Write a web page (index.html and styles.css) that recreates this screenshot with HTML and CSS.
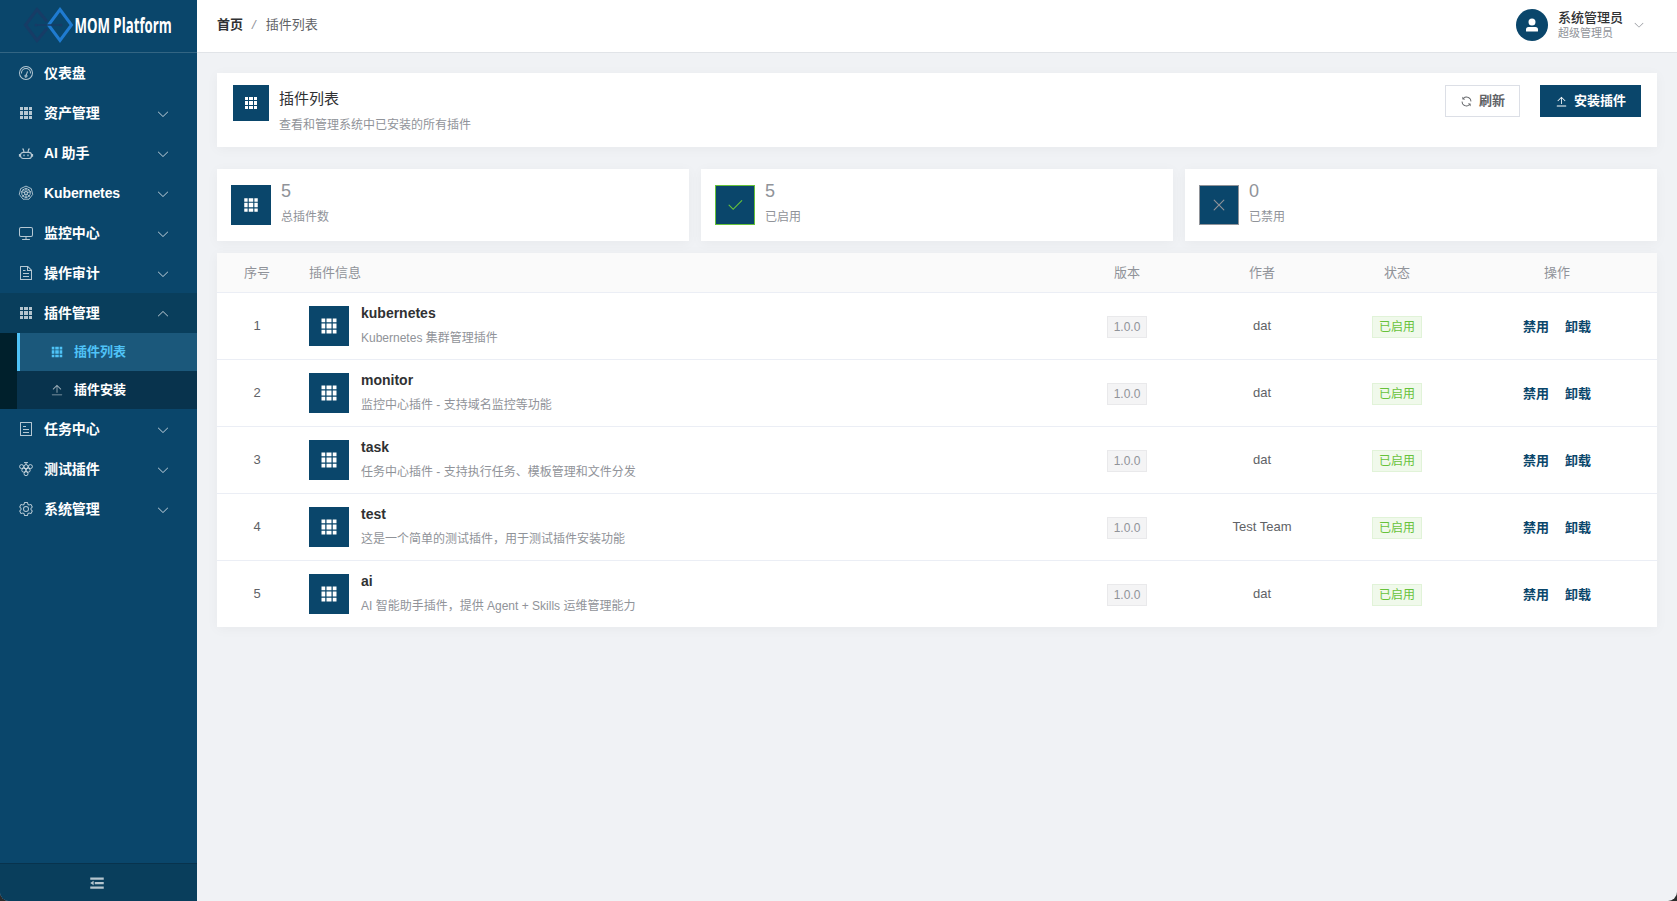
FILE: index.html
```
<!DOCTYPE html>
<html lang="zh-CN">
  <head>
    <meta charset="UTF-8" />
    <meta name="viewport" content="width=device-width, initial-scale=1.0" />
    <title>插件列表 - MOM Platform</title>
    <link rel="stylesheet" href="styles.css">
  </head>

  <body>
    <!-- icon sprite -->
    <svg class="sprite" aria-hidden="true">
      <symbol id="grid" viewBox="0 0 1024 1024"><path d="M640 384v256H384V384zm64 0h192v256H704zm-64 512H384V704h256zm64 0V704h192v192zm-64-768v192H384V128zm64 0h192v192H704zM320 384v256H128V384zm0 512H128V704h192zm0-768v192H128V128z" /></symbol>
      <symbol id="arrow" viewBox="0 0 1024 1024"><path d="M831.872 340.864 512 652.672 192.128 340.864a30.592 30.592 0 0 0-42.752 0 29.12 29.12 0 0 0 0 41.6L489.664 714.24a32 32 0 0 0 44.672 0l340.288-331.712a29.12 29.12 0 0 0 0-41.728 30.592 30.592 0 0 0-42.752 0z" /></symbol>
      <symbol id="upload" viewBox="0 0 1024 1024"><path d="M160 832h704a32 32 0 1 1 0 64H160a32 32 0 1 1 0-64m384-578.304V704h-64V247.296L237.248 490.048 192 444.8 508.8 128l316.8 316.8-45.312 45.248z" /></symbol>
      <symbol id="refresh" viewBox="0 0 1024 1024"><path d="M771.776 794.88A384 384 0 0 1 128 512h64a320 320 0 0 0 555.712 216.448H654.72a32 32 0 1 1 0-64h149.056a32 32 0 0 1 32 32v148.928a32 32 0 1 1-64 0v-50.56zM276.288 295.616h92.992a32 32 0 0 1 0 64H220.16a32 32 0 0 1-32-32V178.56a32 32 0 0 1 64 0v50.56A384 384 0 0 1 896.128 512h-64a320 320 0 0 0-555.776-216.384z" /></symbol>
      <symbol id="odometer" viewBox="0 0 1024 1024"><path d="M512 896a384 384 0 1 0 0-768 384 384 0 0 0 0 768m0 64a448 448 0 1 1 0-896 448 448 0 0 1 0 896" /><path d="M192 512a320 320 0 1 1 640 0 32 32 0 1 1-64 0 256 256 0 1 0-512 0 32 32 0 0 1-64 0" /><path d="M570.432 627.84A96 96 0 1 1 509.568 608l60.992-187.776A32 32 0 1 1 631.424 440l-60.992 187.776zM502.08 734.464a32 32 0 1 0 19.84-60.928 32 32 0 0 0-19.84 60.928" /></symbol>
      <symbol id="robot" viewBox="0 0 16 16"><g fill="none" stroke="currentColor" stroke-width="1.200"><rect x="2.500" y="7.300" width="11" height="6.200" rx="2.800" /><path d="M6 6.800 5.200 4M10 6.800l.8-2.800M1.500 9v2.800M14.500 9v2.800M4.200 4h1.400M10.400 4h1.400" /><path d="M6 9.400v1.800M10 9.400v1.800" /></g></symbol>
      <symbol id="helm" viewBox="0 0 16 16"><g fill="none" stroke="currentColor" stroke-width=".9"><path d="M8 1.100 13.300 3.600 14.700 9.400 11 14.200H5L1.300 9.400 2.700 3.600z" /><circle cx="8" cy="8" r="4.300" /><circle cx="8" cy="8" r="1.500" /><path d="M8 2.800v3.600M8 9.600v3.600M3.200 6.600l3.400 1M9.400 7.600l3.400-1M6.800 9.200l-2.500 2.600M9.200 9.200l2.500 2.600M4.800 4.200l2.200 2.400M11.200 4.200 9 6.600" /></g></symbol>
      <symbol id="monitor" viewBox="0 0 1024 1024"><path d="M544 768v128h192a32 32 0 1 1 0 64H288a32 32 0 1 1 0-64h192V768H192A128 128 0 0 1 64 640V256a128 128 0 0 1 128-128h640a128 128 0 0 1 128 128v384a128 128 0 0 1-128 128zM192 192a64 64 0 0 0-64 64v384a64 64 0 0 0 64 64h640a64 64 0 0 0 64-64V256a64 64 0 0 0-64-64z" /></symbol>
      <symbol id="document" viewBox="0 0 1024 1024"><path d="M832 384H576V128H192v768h640zm-26.496-64L640 154.496V320zM160 64h480l256 256v608a32 32 0 0 1-32 32H160a32 32 0 0 1-32-32V96a32 32 0 0 1 32-32m160 448h384v64H320zm0-192h160v64H320zm0 384h384v64H320z" /></symbol>
      <symbol id="tickets" viewBox="0 0 1024 1024"><path d="M192 128v768h640V128zm-32-64h704a32 32 0 0 1 32 32v832a32 32 0 0 1-32 32H160a32 32 0 0 1-32-32V96a32 32 0 0 1 32-32m160 448h384v64H320zm0-192h192v64H320zm0 384h384v64H320z" /></symbol>
      <symbol id="grape" viewBox="0 0 16 16"><g fill="none" stroke="currentColor"><circle cx="3.600" cy="5.600" r="2" /><circle cx="8" cy="5.600" r="2" /><circle cx="12.400" cy="5.600" r="2" /><circle cx="5.800" cy="9.200" r="2" /><circle cx="10.200" cy="9.200" r="2" /><circle cx="8" cy="12.700" r="2" /><path d="M8 3.600V1.600M6 1.600h4" /></g></symbol>
      <symbol id="setting" viewBox="0 0 1024 1024"><path d="M600.704 64a32 32 0 0 1 30.464 22.208l35.2 109.376c14.784 7.232 28.928 15.36 42.432 24.512l112.384-24.192a32 32 0 0 1 34.432 15.36L944.32 364.8a32 32 0 0 1-4.032 37.504l-77.12 85.12a357.12 357.12 0 0 1 0 49.024l77.12 85.248a32 32 0 0 1 4.032 37.504l-88.704 153.6a32 32 0 0 1-34.432 15.296L708.8 803.904c-13.44 9.088-27.648 17.28-42.368 24.512l-35.264 109.376A32 32 0 0 1 600.704 960H423.296a32 32 0 0 1-30.464-22.208L357.696 828.48a351.616 351.616 0 0 1-42.56-24.64l-112.32 24.256a32 32 0 0 1-34.432-15.36L79.68 659.2a32 32 0 0 1 4.032-37.504l77.12-85.248a357.12 357.12 0 0 1 0-48.896l-77.12-85.248A32 32 0 0 1 79.68 364.8l88.704-153.6a32 32 0 0 1 34.432-15.296l112.32 24.256c13.568-9.152 27.776-17.408 42.56-24.64l35.2-109.312A32 32 0 0 1 423.232 64H600.64zm-23.424 64H446.72l-36.352 113.088-24.512 11.968a294.113 294.113 0 0 0-34.816 20.096l-22.656 15.36-116.224-25.088-65.28 113.152 79.68 88.192-1.92 27.136a293.12 293.12 0 0 0 0 40.192l1.92 27.136-79.808 88.192 65.344 113.152 116.224-25.024 22.656 15.296a294.113 294.113 0 0 0 34.816 20.096l24.512 11.968L446.72 896h130.688l36.48-113.152 24.448-11.904a288.282 288.282 0 0 0 34.752-20.096l22.592-15.296 116.288 25.024 65.28-113.152-79.744-88.192 1.92-27.136a293.12 293.12 0 0 0 0-40.256l-1.92-27.136 79.808-88.128-65.344-113.152-116.288 24.96-22.592-15.232a287.616 287.616 0 0 0-34.752-20.096l-24.448-11.904L577.344 128zM512 320a192 192 0 1 1 0 384 192 192 0 0 1 0-384m0 64a128 128 0 1 0 0 256 128 128 0 0 0 0-256" /></symbol>
      <symbol id="check" viewBox="0 0 1024 1024"><path d="M406.656 706.944 195.84 496.256a32 32 0 1 0-45.248 45.248l256 256 512-512a32 32 0 0 0-45.248-45.248L406.592 706.944z" /></symbol>
      <symbol id="close" viewBox="0 0 1024 1024"><path d="M764.288 214.592 512 466.88 259.712 214.592a31.936 31.936 0 0 0-45.12 45.12L466.752 512 214.528 764.224a31.936 31.936 0 1 0 45.12 45.184L512 557.184l252.288 252.288a31.936 31.936 0 0 0 45.12-45.12L557.12 512.064l252.288-252.352a31.936 31.936 0 1 0-45.12-45.184z" /></symbol>
      <symbol id="user" viewBox="0 0 1024 1024"><path d="M288 320a224 224 0 1 0 448 0 224 224 0 1 0-448 0m544 608H160a32 32 0 0 1-32-32v-96a160 160 0 0 1 160-160h448a160 160 0 0 1 160 160v96a32 32 0 0 1-32 32z" /></symbol>
      <symbol id="fold" viewBox="0 0 1024 1024"><path d="M896 192H128v128h768zm0 256H384v128h512zm0 256H128v128h768zM320 384 128 512l192 128z" /></symbol>
    </svg>

    <div class="app">
      <aside class="sidebar">
        <div class="logo">
          <svg width="197" height="52" viewBox="0 0 197 52">
            <g fill="none" stroke-width="3">
              <path stroke="#173c66" d="M47 21.500 37 9.500 25.500 25 37 40.500 47 28.500" />
              <path stroke="#1f7bd0" d="M60 9.500 71.500 25 60 40.500 48.500 25z" />
              <path stroke="#173c66" stroke-width="1.500" d="M36 25h25" />
            </g>
            <circle cx="36" cy="25" r="1.500" fill="#173c66" />
            <circle cx="61" cy="25" r="1.500" fill="#173c66" />
            <text transform="translate(74.500 33) scale(.6 1)" textLength="162" lengthAdjust="spacingAndGlyphs">MOM Platform</text>
          </svg>
        </div>
        <nav class="menu">
          <div class="item"><svg class="icon"><use href="#odometer" /></svg><span>仪表盘</span></div>
          <div class="item"><svg class="icon"><use href="#grid" /></svg><span>资产管理</span><svg class="arrow"><use href="#arrow" /></svg></div>
          <div class="item"><svg class="icon"><use href="#robot" /></svg><span>AI 助手</span><svg class="arrow"><use href="#arrow" /></svg></div>
          <div class="item"><svg class="icon"><use href="#helm" /></svg><span>Kubernetes</span><svg class="arrow"><use href="#arrow" /></svg></div>
          <div class="item"><svg class="icon"><use href="#monitor" /></svg><span>监控中心</span><svg class="arrow"><use href="#arrow" /></svg></div>
          <div class="item"><svg class="icon"><use href="#document" /></svg><span>操作审计</span><svg class="arrow"><use href="#arrow" /></svg></div>
          <div class="item opened"><svg class="icon"><use href="#grid" /></svg><span>插件管理</span><svg class="arrow"><use href="#arrow" /></svg></div>
          <div class="submenu">
            <div class="subitem active"><svg class="icon"><use href="#grid" /></svg><span>插件列表</span></div>
            <div class="subitem"><svg class="icon"><use href="#upload" /></svg><span>插件安装</span></div>
          </div>
          <div class="item"><svg class="icon"><use href="#tickets" /></svg><span>任务中心</span><svg class="arrow"><use href="#arrow" /></svg></div>
          <div class="item"><svg class="icon"><use href="#grape" /></svg><span>测试插件</span><svg class="arrow"><use href="#arrow" /></svg></div>
          <div class="item"><svg class="icon"><use href="#setting" /></svg><span>系统管理</span><svg class="arrow"><use href="#arrow" /></svg></div>
        </nav>
        <div class="collapse"><svg><use href="#fold" /></svg></div>
      </aside>

      <div class="main">
        <header class="header">
          <div class="breadcrumb"><b>首页</b><i>/</i><span>插件列表</span></div>
          <div class="account">
            <div class="avatar"><svg><use href="#user" /></svg></div>
            <div class="who">
              <p class="name">系统管理员</p>
              <p class="role">超级管理员</p>
            </div>
            <svg class="caret"><use href="#arrow" /></svg>
          </div>
        </header>

        <main class="content">
          <section class="card title-card">
            <div class="tile title-tile"><svg><use href="#grid" /></svg></div>
            <div class="title-text">
              <h1>插件列表</h1>
              <p>查看和管理系统中已安装的所有插件</p>
            </div>
            <div class="actions">
              <button class="btn"><svg><use href="#refresh" /></svg><span>刷新</span></button>
              <button class="btn primary"><svg><use href="#upload" /></svg><span>安装插件</span></button>
            </div>
          </section>

          <section class="stats">
            <div class="card stat">
              <div class="tile"><svg><use href="#grid" /></svg></div>
              <div class="figures"><p class="num">5</p><p class="label">总插件数</p></div>
            </div>
            <div class="card stat">
              <div class="tile enabled"><svg><use href="#check" /></svg></div>
              <div class="figures"><p class="num">5</p><p class="label">已启用</p></div>
            </div>
            <div class="card stat">
              <div class="tile disabled"><svg><use href="#close" /></svg></div>
              <div class="figures"><p class="num">0</p><p class="label">已禁用</p></div>
            </div>
          </section>

          <section class="card table">
            <div class="row head">
              <div>序号</div><div class="info">插件信息</div><div>版本</div><div>作者</div><div>状态</div><div>操作</div>
            </div>
            <div class="row">
              <div>1</div>
              <div class="info">
                <div class="tile"><svg><use href="#grid" /></svg></div>
                <div><p class="plugin">kubernetes</p><p class="desc">Kubernetes 集群管理插件</p></div>
              </div>
              <div><span class="tag">1.0.0</span></div>
              <div>dat</div>
              <div><span class="tag success">已启用</span></div>
              <div class="links"><a>禁用</a><a>卸载</a></div>
            </div>
            <div class="row">
              <div>2</div>
              <div class="info">
                <div class="tile"><svg><use href="#grid" /></svg></div>
                <div><p class="plugin">monitor</p><p class="desc">监控中心插件 - 支持域名监控等功能</p></div>
              </div>
              <div><span class="tag">1.0.0</span></div>
              <div>dat</div>
              <div><span class="tag success">已启用</span></div>
              <div class="links"><a>禁用</a><a>卸载</a></div>
            </div>
            <div class="row">
              <div>3</div>
              <div class="info">
                <div class="tile"><svg><use href="#grid" /></svg></div>
                <div><p class="plugin">task</p><p class="desc">任务中心插件 - 支持执行任务、模板管理和文件分发</p></div>
              </div>
              <div><span class="tag">1.0.0</span></div>
              <div>dat</div>
              <div><span class="tag success">已启用</span></div>
              <div class="links"><a>禁用</a><a>卸载</a></div>
            </div>
            <div class="row">
              <div>4</div>
              <div class="info">
                <div class="tile"><svg><use href="#grid" /></svg></div>
                <div><p class="plugin">test</p><p class="desc">这是一个简单的测试插件，用于测试插件安装功能</p></div>
              </div>
              <div><span class="tag">1.0.0</span></div>
              <div>Test Team</div>
              <div><span class="tag success">已启用</span></div>
              <div class="links"><a>禁用</a><a>卸载</a></div>
            </div>
            <div class="row">
              <div>5</div>
              <div class="info">
                <div class="tile"><svg><use href="#grid" /></svg></div>
                <div><p class="plugin">ai</p><p class="desc">AI 智能助手插件，提供 Agent + Skills 运维管理能力</p></div>
              </div>
              <div><span class="tag">1.0.0</span></div>
              <div>dat</div>
              <div><span class="tag success">已启用</span></div>
              <div class="links"><a>禁用</a><a>卸载</a></div>
            </div>
          </section>
        </main>
      </div>
    </div>
  </body>
</html>
```
FILE: styles.css
```
* {
  box-sizing: border-box;
}

html {
  background: #2b2b2b;
}

body,
h1,
p {
  margin: 0;
}

body {
  font-family: "Liberation Sans", "Noto Sans CJK SC", sans-serif;
  font-size: 13px;
  line-height: 20px;
  color: #606266;
}

svg {
  display: block;
  flex: none;
  fill: currentColor;
}

.sprite {
  display: none;
}

.app {
  display: flex;
  height: 100vh;
  border-radius: 0 0 9px 9px;
  overflow: hidden;
  background: #f0f2f5;
}

/* sidebar */

.sidebar {
  display: flex;
  flex-direction: column;
  width: 197px;
  background: #0a466b;
  color: #fff;
}

.logo {
  height: 53px;
  border-bottom: 1px solid #336583;
}

.logo text {
  font-family: "Open Sans", sans-serif;
  font-size: 22px;
  font-weight: 700;
  fill: #fff;
}

.menu {
  flex: 1;
}

.item {
  display: flex;
  align-items: center;
  height: 40px;
  padding: 0 27.5px 0 17.5px;
  font-size: 14px;
  font-weight: 700;
  letter-spacing: -0.2px;
}

.item span:lang(zh) {
  letter-spacing: -0.1px;
}

.item .icon {
  width: 16px;
  height: 16px;
  margin-right: 10.5px;
  color: rgba(255, 255, 255, 0.7);
}

.item .arrow {
  width: 14px;
  height: 14px;
  margin: 2px 0 0 auto;
  color: rgba(255, 255, 255, 0.7);
}

.opened {
  background: #093e5c;
}

.opened .arrow {
  transform: rotate(180deg);
}

.submenu {
  padding-left: 17px;
  background: #00202c;
}

.subitem {
  display: flex;
  align-items: center;
  height: 38px;
  padding-left: 33px;
  background: #08334d;
  font-weight: 700;
}

.subitem .icon {
  width: 14px;
  height: 14px;
  margin-right: 10px;
  color: rgba(255, 255, 255, 0.6);
}

.subitem.active {
  padding-left: 30px;
  border-left: 3px solid #4fc3f7;
  background: #1b587b;
  color: #4fc3f7;
}

.subitem.active .icon {
  color: #4fc3f7;
}

.collapse {
  display: flex;
  align-items: center;
  justify-content: center;
  height: 38px;
  padding-right: 3px;
  border-top: 1px solid #08334d;
  background: #093e5c;
  color: rgba(255, 255, 255, 0.7);
}

.collapse svg {
  width: 18px;
  height: 18px;
}

/* top bar */

.main {
  flex: 1;
  min-width: 0;
}

.header {
  display: flex;
  align-items: center;
  justify-content: space-between;
  height: 53px;
  padding: 0 32px 0 20px;
  border-bottom: 1px solid #e1e4e8;
  background: #fff;
}

.breadcrumb {
  display: flex;
  padding-bottom: 3px;
}

.breadcrumb b {
  color: #303133;
}

.breadcrumb i {
  margin: 0 10px 0 9px;
  color: #909399;
}

.account {
  display: flex;
  align-items: center;
  padding-bottom: 2px;
}

.avatar {
  display: flex;
  align-items: center;
  justify-content: center;
  width: 32px;
  height: 32px;
  border-radius: 50%;
  background: #0a466b;
  color: #fff;
}

.avatar svg {
  width: 16px;
  height: 16px;
}

.who {
  margin: 0 10px;
}

.name {
  color: #303133;
  font-weight: 500;
  line-height: 17px;
}

.role {
  color: #909399;
  font-size: 11px;
  line-height: 15px;
}

.caret {
  width: 12px;
  height: 12px;
  color: #909399;
}

/* content */

.content {
  padding: 20px;
}

.card {
  background: #fff;
  box-shadow: 0 2px 12px rgba(0, 0, 0, 0.04);
}

.tile {
  display: flex;
  flex: none;
  align-items: center;
  justify-content: center;
  width: 40px;
  height: 40px;
  background: #0a466b;
  color: #fff;
}

.tile svg {
  width: 18px;
  height: 18px;
}

.title-card {
  display: flex;
  height: 74px;
  padding: 12px 16px;
}

.title-tile {
  width: 36px;
  height: 36px;
}

.title-tile svg {
  width: 16px;
  height: 16px;
}

.title-text {
  flex: 1;
  margin-left: 10px;
  padding-top: 1px;
}

.title-text h1 {
  color: #303133;
  font-size: 15px;
  font-weight: 400;
  line-height: 26px;
}

.title-text p {
  color: #909399;
  font-size: 12px;
  line-height: 26px;
}

.actions {
  display: flex;
  gap: 20px;
}

.btn {
  display: flex;
  align-items: center;
  gap: 6px;
  height: 32px;
  padding: 0 14px;
  border: 1px solid #dcdfe6;
  background: #fff;
  color: #606266;
  font: inherit;
  font-weight: 700;
}

.btn svg {
  width: 13px;
  height: 13px;
}

.btn.primary {
  border-color: #0a466b;
  background: #0a466b;
  color: #fff;
}

.stats {
  display: grid;
  grid-template-columns: repeat(3, 1fr);
  gap: 12px;
  margin: 22px 0 12px;
}

.stat {
  display: flex;
  align-items: center;
  gap: 10px;
  height: 72px;
  padding: 0 14px;
  color: #909399;
}

.enabled {
  border: 1px solid #67c23a;
  color: #67c23a;
}

.disabled {
  border: 1px solid #909399;
  color: #909399;
}

.figures {
  padding-bottom: 3px;
}

.num {
  font-size: 18px;
  line-height: 24px;
}

.label {
  margin-top: 2px;
  font-size: 12px;
  line-height: 24px;
}

.row {
  display: grid;
  grid-template-columns: 80px 1fr 120px 150px 120px 200px;
  align-items: center;
  height: 67px;
  border-bottom: 1px solid #ebeef5;
  text-align: center;
}

.row:last-child {
  height: 66px;
  border-bottom: 0;
}

.head {
  height: 40px;
  background: #fafafa;
  color: #909399;
}

.info {
  display: flex;
  align-items: center;
  gap: 12px;
  padding-left: 12px;
  text-align: left;
}

.plugin {
  padding-top: 3px;
  color: #303133;
  font-size: 14px;
  font-weight: 700;
  line-height: 14px;
}

.desc {
  margin-top: 7px;
  color: #909399;
  font-size: 12px;
  line-height: 22px;
}

.row .tile svg {
  width: 20px;
  height: 20px;
}

.tag {
  display: inline-block;
  height: 22px;
  margin-top: 2px;
  padding: 0 6px;
  border: 1px solid #e9e9eb;
  background: #f4f4f5;
  color: #909399;
  font-size: 12px;
  line-height: 20px;
  vertical-align: top;
}

.tag.success {
  border-color: #e1f3d8;
  background: #f0f9eb;
  color: #67c23a;
}

.links {
  display: flex;
  justify-content: center;
  gap: 16px;
  padding-top: 1px;
  color: #0a466b;
  font-weight: 700;
}
```
